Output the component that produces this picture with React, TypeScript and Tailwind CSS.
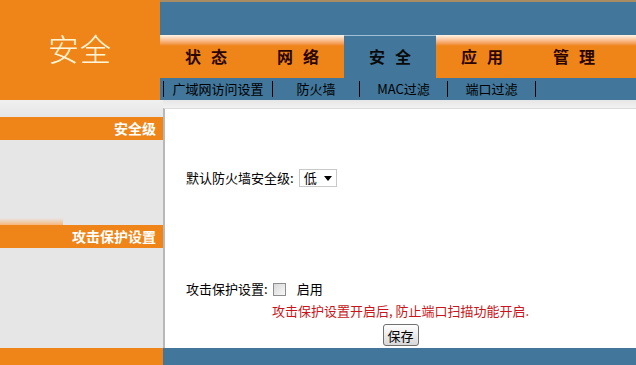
const font = { fontFamily: '"Noto Sans CJK SC", "Liberation Sans", sans-serif' };

const tabs = ["状态", "网络", "安全", "应用", "管理"];
const subs = [
  { label: "广域网访问设置", w: "w-[109px]" },
  { label: "防火墙", w: "w-[87px]" },
  { label: "MAC过滤", w: "w-[88px]" },
  { label: "端口过滤", w: "w-[88px]" },
];

function Tab({ label, active }: { label: string; active?: boolean }) {
  return (
    <div
      className={
        "w-[92px] flex items-center justify-center gap-[10px] text-[16px] font-bold pb-[2px] " +
        (active
          ? "bg-[#42769a] text-[#0a0a0a] border-t border-[#9fc0d6]"
          : "bg-gradient-to-b from-[#fff4e6] via-[#ef8519] via-[25%] to-[#ef8519] text-[#2b0600]")
      }
    >
      <span>{label[0]}</span>
      <span>{label[1]}</span>
    </div>
  );
}

export default function App() {
  return (
    <div className="w-[636px] h-[365px] flex flex-col overflow-hidden bg-white" style={font}>
      {/* header */}
      <div className="flex h-[100px]">
        <div className="w-[160px] bg-[#ef8519] flex items-center justify-center pb-[4px]">
          <span className="text-[31px] font-light text-[#fff6d8] tracking-[1px]">安全</span>
        </div>
        <div className="flex-1 flex flex-col">
          <div className="h-[2px] bg-[#a88c62]" />
          <div className="h-[33px] bg-[#42769a]" />
          <div className="h-[43px] flex bg-gradient-to-b from-[#fff4e6] via-[#ef8519] via-[25%] to-[#ef8519]">
            {tabs.map((t) => (
              <Tab key={t} label={t} active={t === "安全"} />
            ))}
          </div>
          <div className="h-[22px] bg-[#42769a] flex items-center pl-[3px] text-[13px] text-black">
            {subs.map((s) => (
              <div key={s.label} className={s.w + " h-[16px] border-l border-black flex items-center justify-center"}>
                {s.label}
              </div>
            ))}
            <div className="h-[16px] border-l border-black" />
          </div>
        </div>
      </div>

      {/* body */}
      <div className="flex h-[248px]">
        <div className="w-[163px] bg-[#e6e6e6] flex flex-col">
          <div className="h-[17px] bg-gradient-to-b from-[#f0f0f0] to-[#e6e6e6]" />
          <div className="h-[23px] bg-[#ef8519] flex items-center justify-end pr-[7px] text-[14px] font-semibold text-white">
            安全级
          </div>
          <div className="h-[78px]" />
          <div className="h-[7px] w-[63px] bg-gradient-to-b from-[#e6e6e6] to-[#f6b77a]" />
          <div className="h-[23px] bg-[#ef8519] flex items-center justify-end pr-[7px] text-[14px] font-semibold text-white">
            攻击保护设置
          </div>
        </div>
        <div className="flex-1 flex flex-col bg-[#e6e6e6]">
          <div className="h-[8px] bg-gradient-to-b from-[#e6e6e6] to-[#f2f2f2]" />
          <div className="flex-1 bg-white border-l-[2px] border-t border-l-[#b8b8b8] border-t-[#dcdcdc] flex flex-col text-[13px] text-black">
            <div className="pt-[60px] pl-[21px] flex items-center h-[78px]">
              <span>默认防火墙安全级:</span>
              <div className="ml-[5px] w-[38px] h-[18px] border border-[#c8c8c8] flex items-center justify-between px-[4px]">
                <span>低</span>
                <svg width="8" height="5" viewBox="0 0 8 5">
                  <path d="M0 0H8L4 5Z" fill="#000" />
                </svg>
              </div>
            </div>
            <div className="mt-[94px] pl-[21px] flex items-center h-[16px]">
              <span>攻击保护设置:</span>
              <div className="ml-[5px] w-[13px] h-[13px] border border-[#8e8e8e] bg-gradient-to-br from-[#d8d8d8] to-[#f8f8f8]" />
              <span className="ml-[11px]">启用</span>
            </div>
            <div className="mt-[6px] h-[16px] flex items-center justify-center text-[#c8141a]">
              攻击保护设置开启后, 防止端口扫描功能开启.
            </div>
            <div className="mt-[5px] flex justify-center">
              <button className="w-[36px] h-[22px] border border-[#707070] rounded-[3px] bg-gradient-to-b from-white to-[#d8d8d8] text-[13px] leading-none">
                保存
              </button>
            </div>
          </div>
        </div>
      </div>

      {/* footer */}
      <div className="flex flex-1">
        <div className="w-[163px] bg-[#ef8519]" />
        <div className="flex-1 bg-[#42769a]" />
      </div>
    </div>
  );
}
